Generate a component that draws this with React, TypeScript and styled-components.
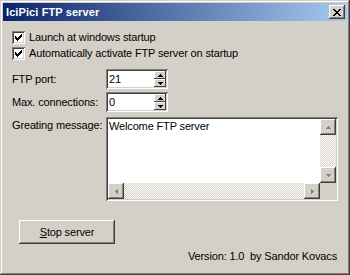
import styled, { createGlobalStyle } from "styled-components";

const GlobalStyle = createGlobalStyle`
  html, body {
    margin: 0;
    padding: 0;
    background: #d4d0c8;
  }
  body {
    font-family: "Liberation Sans", Arial, sans-serif;
    font-size: 11px;
    letter-spacing: -0.15px;
    color: #000;
  }
`;

const raised = `
  box-shadow: inset -1px -1px #404040, inset 1px 1px #fff,
    inset -2px -2px #808080, inset 2px 2px #d4d0c8;
`;

const sunken = `
  box-shadow: inset 1px 1px #808080, inset -1px -1px #fff,
    inset 2px 2px #404040, inset -2px -2px #d4d0c8;
`;

const Window = styled.div`
  width: 350px;
  height: 275px;
  box-sizing: border-box;
  padding: 3px;
  background: #d4d0c8;
  box-shadow: inset -1px -1px #404040, inset 1px 1px #d4d0c8,
    inset -2px -2px #808080, inset 2px 2px #fff;
  display: flex;
  flex-direction: column;
`;

const TitleBar = styled.div`
  height: 18px;
  display: flex;
  align-items: center;
  justify-content: space-between;
  padding: 0 2px 0 3px;
  background: linear-gradient(to right, #0a246a, #a6caf0);
`;

const Title = styled.span`
  color: #fff;
  font-weight: bold;
  font-size: 11px;
  letter-spacing: 0.1px;
`;

const CloseButton = styled.div`
  width: 16px;
  height: 14px;
  background: #d4d0c8;
  ${raised}
  display: flex;
  align-items: center;
  justify-content: center;
`;

const Body = styled.div`
  flex: 1;
  display: flex;
  flex-direction: column;
  padding: 8px 9px 0 9px;
`;

const CheckRow = styled.label`
  height: 16px;
  display: flex;
  align-items: center;
  gap: 4px;
`;

const CheckBox = styled.span`
  width: 13px;
  height: 13px;
  box-sizing: border-box;
  background: #fff;
  ${sunken}
  display: flex;
  align-items: center;
  justify-content: center;
`;

const FormGrid = styled.div`
  display: grid;
  grid-template-columns: 94px 1fr;
  row-gap: 3px;
  margin-top: 8px;
  align-items: center;
`;

const FieldLabel = styled.span<{ $top?: boolean }>`
  align-self: ${(p) => (p.$top ? "start" : "center")};
  padding-top: ${(p) => (p.$top ? "4px" : "0")};
`;

const SpinBox = styled.div`
  width: 62px;
  height: 20px;
  box-sizing: border-box;
  background: #fff;
  ${sunken}
  padding: 2px;
  display: flex;
  align-items: stretch;
`;

const SpinValue = styled.span`
  flex: 1;
  padding-left: 1px;
  line-height: 16px;
`;

const SpinButtons = styled.div`
  width: 12px;
  display: flex;
  flex-direction: column;
`;

const SpinHalf = styled.div`
  flex: 1;
  background: #d4d0c8;
  box-shadow: inset -1px -1px #404040, inset 1px 1px #fff;
  display: flex;
  align-items: center;
  justify-content: center;
`;

const MemoBox = styled.div`
  width: 232px;
  height: 84px;
  margin-top: 2px;
  box-sizing: border-box;
  background: #fff;
  ${sunken}
  padding: 2px;
  display: grid;
  grid-template-columns: 1fr 16px;
  grid-template-rows: 1fr 16px;
`;

const MemoText = styled.div`
  padding: 1px 0 0 1px;
`;

const Track = styled.div<{ $dir: "v" | "h" }>`
  display: flex;
  flex-direction: ${(p) => (p.$dir === "v" ? "column" : "row")};
  justify-content: space-between;
  background: repeating-conic-gradient(#fff 0% 25%, #d4d0c8 0% 50%) 0 0 / 2px
    2px;
`;

const ScrollButton = styled.div`
  width: 16px;
  height: 16px;
  box-sizing: border-box;
  background: #d4d0c8;
  ${raised}
  display: flex;
  align-items: center;
  justify-content: center;
`;

const Corner = styled.div`
  background: #d4d0c8;
`;

const Footer = styled.div`
  display: flex;
  justify-content: space-between;
  align-items: flex-start;
  margin-top: 19px;
  padding-left: 7px;
`;

const Button = styled.div`
  width: 96px;
  height: 24px;
  box-sizing: border-box;
  ${raised}
  display: flex;
  align-items: center;
  justify-content: center;
  u {
    text-decoration: underline;
  }
`;

const Version = styled.span`
  white-space: pre;
  margin-top: 30px;
  margin-right: 1px;
`;

const Check = () => (
  <svg width="7" height="7" viewBox="0 0 7 7">
    <path d="M0 2h1v1h1v1h1V3h1V2h1V1h1V0h1v3H6v1H5v1H4v1H3v1H2V6H1V5H0z" fill="#000" />
  </svg>
);

const Arrow = ({ dir, color = "#000" }: { dir: "up" | "down" | "left" | "right"; color?: string }) => {
  const d = {
    up: "M2 0 L4 2 L0 2 Z",
    down: "M0 0 L4 0 L2 2 Z",
    left: "M2 0 L2 4 L0 2 Z",
    right: "M0 0 L2 2 L0 4 Z",
  }[dir];
  const vertical = dir === "up" || dir === "down";
  return (
    <svg width={vertical ? 5 : 3} height={vertical ? 3 : 5} viewBox={vertical ? "0 0 4 2" : "0 0 2 4"} shapeRendering="crispEdges">
      <path d={d} fill={color} />
    </svg>
  );
};

const Spin = ({ value }: { value: string }) => (
  <SpinBox>
    <SpinValue>{value}</SpinValue>
    <SpinButtons>
      <SpinHalf>
        <Arrow dir="up" />
      </SpinHalf>
      <SpinHalf>
        <Arrow dir="down" />
      </SpinHalf>
    </SpinButtons>
  </SpinBox>
);

export default function App() {
  return (
    <>
      <GlobalStyle />
      <Window>
        <TitleBar>
          <Title>IciPici FTP server</Title>
          <CloseButton>
            <svg width="8" height="7" viewBox="0 0 8 7" shapeRendering="crispEdges">
              <path d="M0 0h2v1h1v1h2V1h1V0h2v1H7v1H6v1H5v1h1v1h1v1h1v1H6V6H5V5H3v1H2v1H0V6h1V5h1V4h1V3H2V2H1V1H0z" fill="#000" />
            </svg>
          </CloseButton>
        </TitleBar>
        <Body>
          <CheckRow>
            <CheckBox>
              <Check />
            </CheckBox>
            Launch at windows startup
          </CheckRow>
          <CheckRow>
            <CheckBox>
              <Check />
            </CheckBox>
            Automatically activate FTP server on startup
          </CheckRow>
          <FormGrid>
            <FieldLabel>FTP port:</FieldLabel>
            <Spin value="21" />
            <FieldLabel>Max. connections:</FieldLabel>
            <Spin value="0" />
            <FieldLabel $top>Greating message:</FieldLabel>
            <MemoBox>
              <MemoText>Welcome FTP server</MemoText>
              <Track $dir="v">
                <ScrollButton>
                  <Arrow dir="up" color="#808080" />
                </ScrollButton>
                <ScrollButton>
                  <Arrow dir="down" color="#808080" />
                </ScrollButton>
              </Track>
              <Track $dir="h">
                <ScrollButton>
                  <Arrow dir="left" color="#808080" />
                </ScrollButton>
                <ScrollButton>
                  <Arrow dir="right" color="#808080" />
                </ScrollButton>
              </Track>
              <Corner />
            </MemoBox>
          </FormGrid>
          <Footer>
            <Button>
              <span>
                <u>S</u>top server
              </span>
            </Button>
            <Version>Version: 1.0  by Sandor Kovacs</Version>
          </Footer>
        </Body>
      </Window>
    </>
  );
}
